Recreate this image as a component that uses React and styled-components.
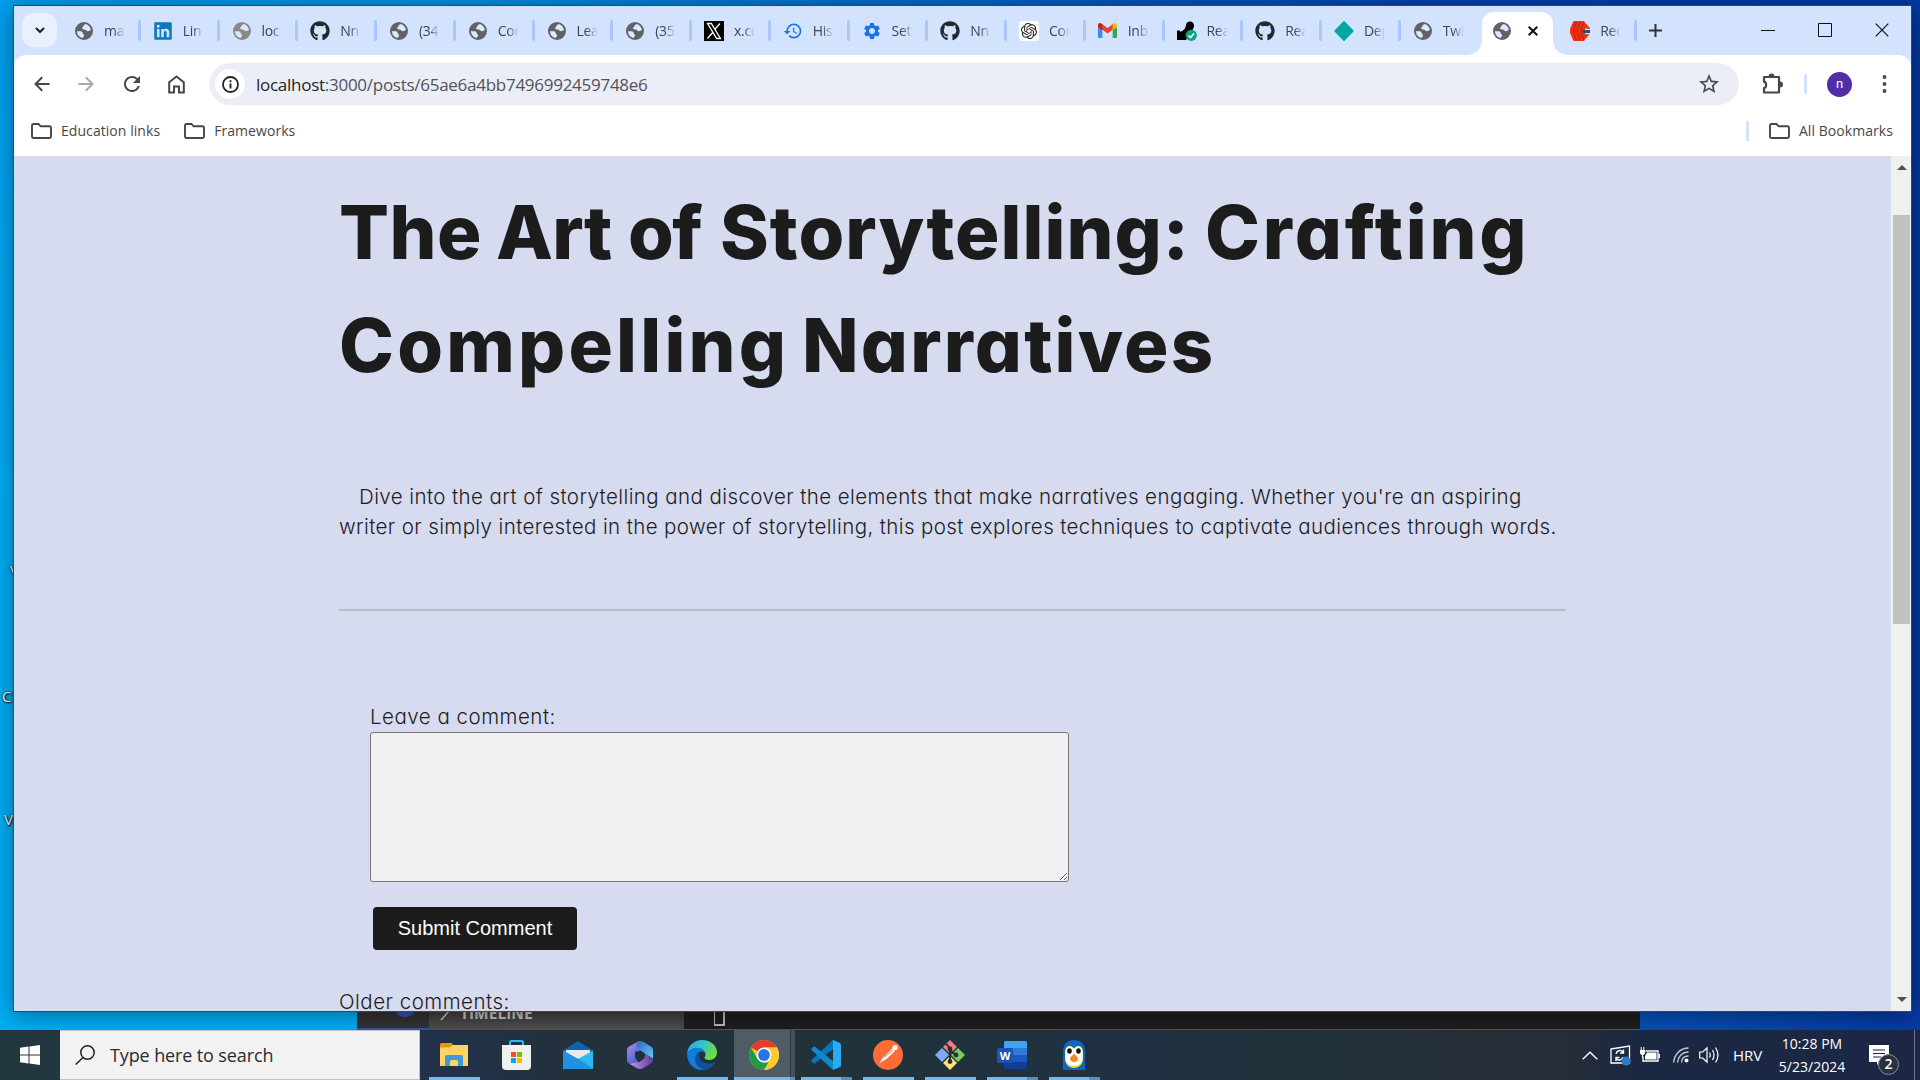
import React from "react";
import styled, { createGlobalStyle, css } from "styled-components";
import { FaGithub, FaLinkedin } from "react-icons/fa";
import { MdHistory, MdSettings, MdRefresh, MdStarBorder } from "react-icons/md";
import { SiOpenai } from "react-icons/si";

const UI = `"Open Sans", "Noto Sans", sans-serif`;
const PAGE = `Inter, "Open Sans", sans-serif`;

const Global = createGlobalStyle`
  * { box-sizing: border-box; }
  body { margin: 0; overflow: hidden; }
  svg { display: block; flex: none; }
`;

/* ---------- desktop ---------- */

const Desktop = styled.div`
  position: relative;
  width: 1920px;
  height: 1080px;
  overflow: hidden;
  display: flex;
  flex-direction: column;
  font-family: ${UI};
  background:
    linear-gradient(#009fee 0, #00aef6 500px) 0 0 / 14px 100% no-repeat,
    linear-gradient(90deg, #009fee 0, #0090e4 480px, #0076d4 780px, #0054bd 1150px, #003fae 1500px, #003aa6 1920px) 0 0 / 100% 10px no-repeat,
    linear-gradient(90deg, transparent 0 1600px, #0750b9 1640px, #0639a5 1920px) 0 1000px / 100% 40px no-repeat,
    linear-gradient(90deg, #00aef6 0 960px, #0039a0 960px);
`;

const DesktopLabel = styled.span`
  position: absolute;
  left: ${(p) => p.$x}px;
  top: ${(p) => p.$y}px;
  font-size: 15px;
  line-height: 20px;
  color: #fff;
  text-shadow: 1px 1px 2px #000, 0 0 2px #000;
`;

/* ---------- editor window behind the browser ---------- */

const Editor = styled.div`
  position: absolute;
  left: 357px;
  top: 990px;
  width: 1283px;
  height: 40px;
  display: flex;
  background: #1e1e1e;
  border-bottom: 1px solid #555;
`;
const ActivityBar = styled.div`
  width: 72px;
  padding-left: 37px;
  background: #333;
  border-bottom: 1px solid #3a50a8;
`;
const ActivityDot = styled.div`
  width: 22px;
  height: 22px;
  margin-top: 5px;
  border-radius: 50%;
  background: #3850b4;
`;
const SideBar = styled.div`
  width: 255px;
  padding: 15px 0 0 11px;
  display: flex;
  gap: 10px;
  background: linear-gradient(#3c3c3c 50%, #4f4f4f);
  color: #c4c4c4;
  font-size: 15.5px;
  line-height: 17px;
  font-weight: 700;
`;
const Cursor = styled.div`
  width: 11px;
  height: 20px;
  margin: 16px 0 0 30px;
  border: 2px solid #bbb;
  border-left-width: 1px;
`;

/* ---------- browser ---------- */

const Browser = styled.div`
  position: absolute;
  left: 13px;
  top: 5px;
  width: 1899px;
  height: 1007px;
  display: flex;
  flex-direction: column;
  border: 1px solid #2c4a66;
  background: #fff;
  box-shadow: 0 3px 22px rgba(0, 0, 0, 0.42);
`;
const TabStrip = styled.div`
  height: 49px;
  flex: none;
  display: flex;
  background: #d3e3fd;
`;
const TabSearch = styled.div`
  width: 35px;
  height: 34px;
  margin: 7px 4px 0 8px;
  border-radius: 12px;
  background: #e9f1fe;
  display: grid;
  place-items: center;
`;
const TabBox = styled.div`
  position: relative;
  width: 78.75px;
  height: 49px;
  flex: none;
  padding-left: 14px;
  display: flex;
  align-items: center;
  gap: 11px;
  ${(p) =>
    p.$divider &&
    css`
      &::after {
        content: "";
        position: absolute;
        right: -1px;
        top: 14px;
        width: 3px;
        height: 21px;
        border-radius: 2px;
        background: #a8c7fa;
      }
    `}
`;
const TabLabel = styled.span`
  width: 21px;
  overflow: hidden;
  white-space: nowrap;
  font-size: 14px;
  line-height: 20px;
  letter-spacing: -0.3px;
  color: #3c4350;
  mask-image: linear-gradient(90deg, #000 45%, transparent);
`;
const ActiveTab = styled.div`
  position: relative;
  width: 71px;
  height: 43px;
  flex: none;
  margin: 6px 4.75px 0 3px;
  padding: 0 15px 5px 11px;
  display: flex;
  align-items: center;
  justify-content: space-between;
  border-radius: 12px 12px 0 0;
  background: #fff;
  &::before,
  &::after {
    content: "";
    position: absolute;
    bottom: 0;
    width: 14px;
    height: 14px;
  }
  &::before {
    left: -14px;
    background: radial-gradient(circle at 0 0, transparent 13.5px, #fff 14px);
  }
  &::after {
    right: -14px;
    background: radial-gradient(circle at 100% 0, transparent 13.5px, #fff 14px);
  }
`;
const Favicon = styled.span`
  width: 20px;
  height: 20px;
  flex: none;
  display: grid;
  place-items: center;
  margin: 0 -1px;
  color: ${(p) => p.$color || "#5f6368"};
  background: ${(p) => p.$bg || "none"};
  border-radius: ${(p) => p.$radius || 0}px;
`;
const NewTab = styled.div`
  padding: 18px 0 0 13px;
  flex: 1;
`;
const WindowButtons = styled.div`
  display: flex;
  gap: 43px;
  padding: 17px 22px 0 0;
`;

const ToolbarWrap = styled.div`
  background: #d3e3fd;
`;
const Toolbar = styled.div`
  height: 58px;
  flex: none;
  display: flex;
  align-items: center;
  background: #fff;
  border-radius: 12px 12px 0 0;
  padding-left: 16px;
  color: #474747;
`;
const NavButton = styled.span`
  width: 45px;
  padding-left: ${(p) => p.$pad || 0}px;
`;
const Omnibox = styled.div`
  width: 1530px;
  height: 42px;
  margin-left: -1px;
  padding: 0 18px 0 6px;
  display: flex;
  align-items: center;
  border-radius: 21px;
  background: #ebeef7;
`;
const SiteInfo = styled.span`
  width: 30px;
  height: 30px;
  border-radius: 50%;
  background: #fff;
  display: grid;
  place-items: center;
`;
const Url = styled.span`
  flex: 1;
  margin: 0 0 0 11px;
  font-size: 17px;
  letter-spacing: -0.27px;
  color: #50535a;
  b {
    font-weight: 400;
    color: #1f1f1f;
  }
`;
const Divider = styled.span`
  width: 3px;
  height: 20px;
  border-radius: 1px;
  background: #d3e3fd;
`;
const Avatar = styled.span`
  width: 25px;
  height: 25px;
  margin: 0 30px 0 20px;
  border-radius: 50%;
  background: #512da8;
  color: #fff;
  font: 13px/24px Roboto, sans-serif;
  text-align: center;
`;
const Extensions = styled.span`
  margin: 0 21px 0 23px;
`;

const Bookmarks = styled.div`
  height: 43px;
  flex: none;
  display: flex;
  align-items: center;
  padding: 0 18px 7px 17px;
  background: #fff;
  color: #474747;
`;
const Bookmark = styled.span`
  display: flex;
  align-items: center;
  gap: 9px;
  margin-right: ${(p) => p.$after || 0}px;
  margin-left: ${(p) => p.$before || 0}px;
  font-size: 14px;
  letter-spacing: 0.06px;
  line-height: 20px;
  white-space: nowrap;
`;
const Spacer = styled.span`
  flex: 1;
`;

/* ---------- page ---------- */

const Viewport = styled.div`
  flex: 1;
  min-height: 0;
  display: flex;
  overflow: hidden;
  background: #d6dbf0;
`;
const Post = styled.main`
  flex: 1;
  padding: 20px 325px 0;
  color: #1c1c1c;
  font-family: ${PAGE};
  font-feature-settings: "cv11";
  white-space: nowrap;
`;
const Title = styled.h1`
  margin: 0;
  font-size: 74px;
  line-height: 112.5px;
  font-weight: 800;
`;
const TitleLine = styled.span`
  display: flex;
`;
const Word = styled.span`
  width: ${(p) => p.$w}px;
  letter-spacing: ${(p) => p.$ls || 0}px;
`;
const Body = styled.p`
  margin: 81px 0 0;
  font-size: 20.5px;
  line-height: 30px;
  font-weight: 350;
`;
const Line = styled.span`
  display: block;
  padding-left: ${(p) => p.$indent || 0}px;
  letter-spacing: ${(p) => p.$ls || 0}px;
`;
const Rule = styled.hr`
  margin: 67px 0 0;
  border: 0;
  height: 2px;
  background: #b9bbc6;
`;
const Form = styled.form`
  margin: 91px 0 0 31px;
  display: flex;
  flex-direction: column;
  align-items: flex-start;
`;
const Label = styled.label`
  font-size: 20.5px;
  line-height: 30px;
  font-weight: 350;
  letter-spacing: 0.5px;
`;
const CommentBox = styled.textarea`
  width: 699px;
  height: 150px;
  border: 1px solid #767676;
  border-radius: 3px;
  background: #f1f1f4;
  resize: both;
`;
const Submit = styled.button`
  width: 204px;
  height: 43px;
  margin: 25px 0 37px 3px;
  padding: 0;
  border: 0;
  border-radius: 4px;
  background: #1c1c1c;
  color: #fff;
  font: 20px "Liberation Sans", sans-serif;
`;
const ScrollTrack = styled.div`
  width: 20px;
  padding: 9px 1px 9px 2px;
  display: flex;
  flex-direction: column;
  align-items: center;
  background: #f0f0f0;
`;
const ScrollThumb = styled.div`
  width: 17px;
  height: 409px;
  margin: 45px 0 auto;
  background: #c1c1c1;
`;

/* ---------- taskbar ---------- */

const Taskbar = styled.div`
  position: relative;
  height: 50px;
  margin-top: auto;
  display: flex;
  color: #fff;
  background: linear-gradient(90deg, #223840 0, #22333d 380px, #21314a 430px, #23313d 560px, #20323a 900px, #203042 1120px, #20323a 1300px, #262d37 1480px, #262d38 1560px, #1b2842 1640px, #1b2745 1920px);
`;
const Start = styled.div`
  width: 60px;
  padding: 15px 0 0 20px;
`;
const Search = styled.div`
  width: 360px;
  padding-left: 15px;
  display: flex;
  align-items: center;
  gap: 15px;
  background: #f2f2f2;
  border: 1px solid #c0c0c0;
  border-left: 0;
  color: #2b2b2b;
  font-size: 18px;
  letter-spacing: -0.12px;
`;
const Apps = styled.div`
  display: flex;
  padding-left: 3px;
`;
const AppButton = styled.div`
  position: relative;
  width: 62px;
  height: 50px;
  display: grid;
  place-items: center;
  ${(p) =>
    p.$active &&
    css`
      background: linear-gradient(90deg, transparent 0 1px, #505c65 1px 57px, #2a363e 57px 58px, #46525a 58px);
    `}
  ${(p) =>
    p.$open &&
    css`
      &::after {
        content: "";
        position: absolute;
        left: ${p.$active ? 1 : 6}px;
        right: ${p.$active ? 0 : 5}px;
        bottom: 0;
        height: 3px;
        background: ${p.$multi
          ? `linear-gradient(90deg, #76b9ed 0 calc(100% - ${p.$active ? 5 : 11}px), #5a8fb8 calc(100% - ${p.$active ? 5 : 11}px))`
          : "#76b9ed"};
      }
    `}
`;
const Tray = styled.div`
  margin-left: auto;
  display: flex;
  align-items: center;
`;
const TrayItem = styled.span`
  width: ${(p) => p.$w}px;
`;
const Lang = styled.span`
  width: 45px;
  font-size: 15px;
`;
const Clock = styled.div`
  width: 68px;
  font-size: 14px;
  line-height: 23px;
  white-space: nowrap;
  display: flex;
  flex-direction: column;
  align-items: center;
`;
const Notice = styled.div`
  position: relative;
  width: 45px;
  margin-left: 23px;
`;
const NoticeCount = styled.span`
  position: absolute;
  left: 9px;
  top: 9px;
  width: 21px;
  height: 21px;
  border-radius: 50%;
  border: 1px solid #8a8f96;
  background: #2b323b;
  font: 600 14px/18px ${UI};
  text-align: center;
`;
const ShowDesktop = styled.span`
  width: 6px;
  height: 50px;
  border-left: 1px solid #6c7382;
`;

/* ---------- drawings ---------- */

const Globe = ({ dim }) => (
  <svg width="18" height="18" viewBox="0 0 18 18" opacity={dim ? 0.8 : 1}>
    <circle cx="9" cy="9" r="9" fill={dim ? "#77736c" : "#5f6368"} />
    <path d="M2 9c1.500.4 4.300-.3 5.300 1 .8 1.100.1 2 1.300 2.400 1 .3.6 1.600-.3 2.600-.5.6-.7 1-1 1C4.400 15.200 2 12.800 2 9Z" fill="#dfe9fb" />
    <path d="M11.500 2.300C14 3.400 15.700 5.700 15.900 8.200c-1.300-.2-1.800 1-3.300 1-1.600 0-1.500-1.600-2.800-1.600-1.500 0-2.700-.2-2.700-1.500 0-1.200 1.400-1.100 1.400-2.200 0-1 1.200-1.600 3-1.600Z" fill="#dfe9fb" />
  </svg>
);
const Gmail = () => (
  <svg width="19" height="15" viewBox="0 0 19 15">
    <path d="M0 3h4.300v12H1.300Q0 15 0 13.700Z" fill="#4285f4" />
    <path d="M14.700 3H19v10.700q0 1.300-1.300 1.300h-3Z" fill="#34a853" />
    <path d="M0 2C0 .2 1.900-.6 3.300.4L9.500 5.100 15.700.4V6L9.500 10.600 0 3.600Z" fill="#ea4335" />
    <path d="M14.700 1.200C16.500-.7 19 .2 19 2.200V4l-4.300 3.200Z" fill="#fbbc04" />
    <path d="M0 2.200V4l4.300 3.200V1.200C2.500-.6 0 .2 0 2.200Z" fill="#c5221f" />
  </svg>
);
const XLogo = () => (
  <svg width="20" height="20" viewBox="0 0 20 20">
    <rect width="20" height="20" fill="#000" />
    <path d="M3.500 2.500h3.800l9.200 15h-3.800ZM16 2.500l-5.500 6.300M8.900 11.300 3.500 17.500" fill="none" stroke="#fff" strokeWidth="1.300" />
  </svg>
);
const TestedRobot = () => (
  <svg width="20" height="20" viewBox="0 0 20 20">
    <path d="M0 19V9.500h2.500l1 1.300c2.500-1 4.500-2.400 5.200-5.300C8.800 2 10.500.5 13 .5s4 1.800 4 4.300c0 1.500-.5 2.700-1.500 4L9 19Z" fill="#000" />
    <circle cx="14.300" cy="14.300" r="5.600" fill="#10a37f" />
    <path d="m11.500 14.500 2 2 3.500-4" fill="none" stroke="#fff" strokeWidth="1.600" />
  </svg>
);
const Diamond = () => (
  <svg width="20" height="20" viewBox="0 0 20 20">
    <path d="M10 .8 19 10l-9 9.200L1 10Z" fill="#00a8a0" stroke="#00a8a0" strokeWidth="1.400" strokeLinejoin="round" />
  </svg>
);
const Stripes = () => (
  <svg width="20" height="20" viewBox="0 0 20 20">
    <path d="M3.500 0h10L20 7v6l-6.500 7h-10L0 12V8Z" fill="#f0300f" />
    <path d="M6.500.5 3.800 7.500v5l2.700 7M10.300.5 7.600 7.500v5l2.700 7M14.100.5l-2.700 7v5l2.700 7" fill="none" stroke="#a32410" strokeWidth=".8" />
    <path d="M15 7.500 20 8v5.500l-5-.5Z" fill="#d3e3fd" />
    <path d="M12.500 9H20v3h-7.500Z" fill="#155e68" />
  </svg>
);
const Cross = ({ size, w = 1.4 }) => (
  <svg width={size} height={size} viewBox={`0 0 ${size} ${size}`}>
    <path d={`M.7.7 ${size - 0.7} ${size - 0.7}M${size - 0.7}.7.7 ${size - 0.7}`} stroke="#111" strokeWidth={w} />
  </svg>
);
const Arrow = ({ flip, color }) => (
  <svg width="16" height="16" viewBox="0 0 16 16">
    <path d={flip ? "M.5 8H14M7.800 1.200 14.500 8l-6.700 6.800" : "M15.500 8H2M8.200 1.200 1.500 8l6.700 6.800"} fill="none" stroke={color} strokeWidth="2" />
  </svg>
);
const Home = () => (
  <svg width="17" height="19" viewBox="0 0 17 19">
    <path d="M1.200 7.200 8.500 1.500l7.300 5.700V17.500h-4.800v-6H6v6H1.200Z" fill="none" stroke="#474747" strokeWidth="2" />
  </svg>
);
const Info = () => (
  <svg width="17" height="17" viewBox="0 0 17 17">
    <circle cx="8.500" cy="8.500" r="7.500" fill="none" stroke="#222" strokeWidth="1.800" />
    <path d="M8.500 7.500v5M8.500 4.300v1.900" stroke="#222" strokeWidth="1.900" />
  </svg>
);
const Puzzle = () => (
  <svg width="21" height="22" viewBox="0 0 21 22">
    <path d="M2 4h15v15.500H2v-4.300c2.800-.5 2.800-6 0-6.500Z" fill="none" stroke="#474747" strokeWidth="2.200" strokeLinejoin="round" />
    <path d="M6.500 3.500a3 3 0 0 1 6 0ZM18 8.500a3 3 0 0 1 0 6Z" fill="#474747" />
  </svg>
);
const Dots = () => (
  <svg width="5" height="18" viewBox="0 0 5 18">
    {[2, 9, 16].map((y) => <circle key={y} cx="2.500" cy={y} r="1.900" fill="#474747" />)}
  </svg>
);
const Folder = () => (
  <svg width="21" height="16" viewBox="0 0 21 16">
    <path d="M1 2.500Q1 1 2.500 1h5l2.200 2.300h8.800Q20 3.300 20 4.800v8.700q0 1.500-1.500 1.500h-16Q1 15 1 13.500Z" fill="none" stroke="#474747" strokeWidth="1.900" />
  </svg>
);
const Tri = ({ down }) => (
  <svg width="10" height="5" viewBox="0 0 10 5">
    <path d={down ? "M0 0h10L5 5Z" : "M0 5h10L5 0Z"} fill="#505050" />
  </svg>
);

const Explorer = () => (
  <svg width="28" height="24" viewBox="0 0 28 24">
    <path d="M0 1.500Q0 0 1.500 0h10l2 2.500V6H0Z" fill="#e19c05" />
    <path d="M0 4.500h10l3-2.500h15v21H0Z" fill="#fdd368" />
    <path d="M5 23v-9q0-2 2-2h14q2 0 2 2v9h-5v-4.500q0-1.500-1.500-1.500h-5q-1.500 0-1.500 1.500V23Z" fill="#3f97dc" />
  </svg>
);
const Store = () => (
  <svg width="29" height="30" viewBox="0 0 29 30">
    <path d="M8 6V2.500Q8 1 9.500 1h10Q21 1 21 2.500V6" fill="none" stroke="#2fb7ef" strokeWidth="2" />
    <path d="M0 5h29v21q0 4-4 4H4q-4 0-4-4Z" fill="#f0f0f0" />
    <path d="M9 12h5v5H9Z" fill="#f25022" /><path d="M15 12h5v5h-5Z" fill="#7fba00" />
    <path d="M9 18h5v5H9Z" fill="#00a4ef" /><path d="M15 18h5v5h-5Z" fill="#ffb900" />
  </svg>
);
const Mail = () => (
  <svg width="30" height="28" viewBox="0 0 30 28">
    <path d="M0 9.500 15 0l15 9.500V14H0Z" fill="#0f62b0" />
    <path d="M3 9h24v9H3Z" fill="#e8eaee" />
    <path d="M0 9.500 15 18 30 9.500V28H0Z" fill="#2fb8f2" />
    <path d="M0 28 15 17.500 30 28Z" fill="#1c93e0" />
    <path d="M0 9.500V28L15 18Z" fill="#2191dd" />
  </svg>
);
const Office = () => (
  <svg width="26" height="28" viewBox="0 0 26 28">
    <defs>
      <linearGradient id="o1" x1="0" y1="0" x2=".4" y2="1"><stop offset="0" stopColor="#b98be4" /><stop offset="1" stopColor="#4a63d2" /></linearGradient>
      <linearGradient id="o2" x1="0" y1="0" x2="1" y2="1"><stop offset="0" stopColor="#3563c8" /><stop offset="1" stopColor="#5cd0f7" /></linearGradient>
      <linearGradient id="o3" x1="0" y1="0" x2="1" y2="0"><stop offset="0" stopColor="#c690ea" /><stop offset="1" stopColor="#5a3f9c" /></linearGradient>
    </defs>
    <path d="M12 0 2 5.500Q0 6.700 0 9v10q0 2.300 2 3.500l6 3.200 3-5-3-4V11l4-3Z" fill="url(#o1)" />
    <path d="M10 1.200Q13-.8 16 .8l8 4.700q2 1.200 2 3.500v8.500l-8.500-5L13 9.500 9.500 11V3Z" fill="url(#o2)" />
    <path d="M26 17.500V19q0 2.300-2 3.500l-8.500 5q-2.500 1.200-5 0L3 23l6-1.500q4 0 8-3.500l1.500-5Z" fill="url(#o3)" />
    <path d="m13 9.500 4 2.200v4.600l-4 2.200-4-2.200v-4.600Z" fill="#202f3a" />
  </svg>
);
const Edge = () => (
  <svg width="30" height="30" viewBox="0 0 30 30">
    <defs>
      <linearGradient id="e1" x1="0" y1="0" x2="1" y2=".5"><stop offset="0" stopColor="#2ba7e8" /><stop offset=".5" stopColor="#35c4c8" /><stop offset="1" stopColor="#6ce03d" /></linearGradient>
    </defs>
    <path d="M15 0c9 0 15 5.800 15 12.500 0 4.500-3.500 7.500-7.500 7.500-2.500 0-5-.8-5-2.200 0-.8 1-1.300 1-3.300C18.500 11 15 8.500 11 8.500 6 8.500 1.500 11 .2 13 1 5.500 7.500 0 15 0Z" fill="url(#e1)" />
    <path d="M.2 13C1.500 9.800 5.500 7.800 10.500 7.800c5 0 8 3.200 8 6.700-.4-2-2-3.200-4.200-3-3 .3-5.300 3-5.300 7 0 5.500 4.500 10.500 10 10.800C17.500 30 16 30 15 30 6 30-.8 22 .2 13Z" fill="#137bd8" />
    <path d="M14.300 11.500C11 12.500 8 15.500 8 19.500c0 5 4 9.700 10 10.200 4.500-.5 8-3.200 10-6.700.3-.7-.3-1-1-.6-1.300.6-3 1-5 1-6 0-10-3.400-10-7.700 0-1.700.8-3.300 2.300-4.200Z" fill="#11519b" />
  </svg>
);
const ChromeLogo = () => (
  <svg width="30" height="30" viewBox="0 0 30 30">
    <circle cx="15" cy="15" r="15" fill="#fcc934" />
    <path d="M15 15 2 7.500A15 15 0 0 1 28 7.500H15Z" fill="#e33b2e" />
    <path d="M2 7.500 8.500 18.800 15 22.500h5L15 30A15 15 0 0 1 2 7.500Z" fill="#25994b" />
    <path d="M21.500 18.700 15 30A15 15 0 0 0 28 7.500H15Z" fill="#fcc934" />
    <circle cx="15" cy="15" r="7.500" fill="#fff" /><circle cx="15" cy="15" r="5.900" fill="#2a72e8" />
  </svg>
);
const Code = () => (
  <svg width="30" height="30" viewBox="0 0 30 30">
    <path d="M22 0v9L4 23.200q-.8.600-1.600 0L.500 21.500q-.8-.8 0-1.600Z" fill="#0078c1" />
    <path d="M22 30v-9L4 6.800q-.8-.6-1.600 0L.500 8.500q-.8.8 0 1.600Z" fill="#1088ce" />
    <path d="m22 0 7 3q1 .5 1 1.500v21q0 1-1 1.500l-7 3Z" fill="#2aaaf2" />
  </svg>
);
const Postman = () => (
  <svg width="30" height="30" viewBox="0 0 30 30">
    <circle cx="15" cy="15" r="15" fill="#ff6c37" />
    <circle cx="22" cy="7.500" r="2.600" fill="#fff" />
    <path d="m19.500 8.500 2.500 2.500-8.500 8-7 4 3.500-5.500Z" fill="#fff" />
    <path d="m10.500 18 9-7.500" stroke="#ff6c37" strokeWidth=".8" />
  </svg>
);
const Git = () => (
  <svg width="30" height="30" viewBox="0 0 30 30">
    <path d="m15 0 7 7-7 7-7-7Z" fill="#f27c7c" /><path d="m23 8 7 7-7 7-7-7Z" fill="#7fcb58" />
    <path d="m7 8 7 7-7 7-7-7Z" fill="#7aacf8" /><path d="m15 16 7 7-7 7-7-7Z" fill="#fbe376" />
    <path d="m11 3.500 4 5V22M15 10l5.500 5" fill="none" stroke="#26313a" strokeWidth="2" />
    <circle cx="15" cy="9" r="2.400" fill="#26313a" /><circle cx="15" cy="21.500" r="2.400" fill="#26313a" /><circle cx="21" cy="15" r="2.400" fill="#26313a" />
  </svg>
);
const WordLogo = () => (
  <svg width="30" height="28" viewBox="0 0 30 28">
    <path d="M7 1.500Q7 0 8.500 0h20Q30 0 30 1.500V7H7Z" fill="#41a5ee" /><path d="M7 7h23v7H7Z" fill="#2b7cd3" />
    <path d="M7 14h23v7H7Z" fill="#185abd" /><path d="M7 21h23v5.500q0 1.500-1.500 1.500h-20Q7 28 7 26.500Z" fill="#103f91" />
    <rect y="7" width="16" height="15" rx="1.500" fill="#1a55b5" />
    <text x="8" y="18.500" textAnchor="middle" fontFamily="Open Sans" fontWeight="700" fontSize="11" fill="#fff">W</text>
  </svg>
);
const Penguin = () => (
  <svg width="24" height="30" viewBox="0 0 24 30">
    <path d="M1 12C1 4 5 0 12 0s11 4 11 12v18H1Z" fill="#0b68bd" />
    <path d="M3 13c0-5 2-7 4.500-7S12 8 12 9c0-1 2-3 4.500-3S21 8 21 13v6c0 5-4 9-9 9s-9-4-9-9Z" fill="#ffd23a" />
    <path d="M3.500 12c0-4 2-5.500 4-5.500S12 8 12 9.500c0-1.500 2.500-3 4.500-3s4 1.500 4 5.500v6c0 5-4 8-8.500 8s-8.500-3-8.500-8Z" fill="#fff" />
    <ellipse cx="7.500" cy="11" rx="2.300" ry="2.800" fill="#111" /><ellipse cx="16.500" cy="11" rx="2.300" ry="2.800" fill="#111" />
    <path d="M12 13.500 16 18q0 4-4 4t-4-4Z" fill="#f08a1d" />
  </svg>
);
const Windows = () => (
  <svg width="20" height="20" viewBox="0 0 20 20">
    <path d="M0 2.800 8.500 1.600V9.500H0ZM9.500 1.500 20 0v9.500H9.500ZM0 10.500h8.500v7.900L0 17.200ZM9.500 10.500H20V20L9.500 18.500Z" fill="#fff" />
  </svg>
);
const Lens = () => (
  <svg width="20" height="20" viewBox="0 0 20 20">
    <circle cx="12.500" cy="7.500" r="6.700" fill="none" stroke="#222" strokeWidth="1.500" /><path d="M8 12.500.7 19.500" stroke="#222" strokeWidth="1.500" />
  </svg>
);
const TrayUp = () => (
  <svg width="16" height="9" viewBox="0 0 16 9"><path d="m.7 8.300 7.300-7 7.300 7" fill="none" stroke="#fff" strokeWidth="1.400" /></svg>
);
const TrayUpdate = () => (
  <svg width="21" height="21" viewBox="0 0 21 21">
    <path d="M1 4 19.500 1v17H1Z" fill="none" stroke="#fff" strokeWidth="1.300" />
    <path d="M6 9a4 4 0 0 1 7-2M13.500 4.500V8H10M13 12a4 4 0 0 1-6.500 2M6 16v-3.500h3.500" fill="none" stroke="#fff" strokeWidth="1.400" />
    <circle cx="16" cy="16" r="4.600" fill="#2f78c4" />
  </svg>
);
const TrayBattery = () => (
  <svg width="20" height="16" viewBox="0 0 20 16">
    <path d="M5.500 4H18v10H3V9.500" fill="none" stroke="#fff" strokeWidth="1.300" /><path d="M7 5.500h9.500v7H5V9Z" fill="#fff" />
    <path d="M18.500 7H20v4h-1.500ZM0 3h5v3.500L3.500 8h-2L0 6.500Z" fill="#fff" /><path d="M1.200 3V0M3.800 3V0M2.500 8v3" stroke="#fff" />
  </svg>
);
const TrayWifi = () => (
  <svg width="16" height="16" viewBox="0 0 16 16">
    <path d="M.7 15.500C1 8 7 1 15.500 1M4.500 15.500C4.800 10 9 5 15.500 5M8.500 15.500c.2-4 3-6.500 7-6.500" fill="none" stroke="#c8ccd4" strokeWidth="1.300" />
    <circle cx="13.500" cy="13.500" r="2" fill="#fff" />
  </svg>
);
const TrayVolume = () => (
  <svg width="21" height="18" viewBox="0 0 21 18">
    <path d="M.7 6h3L8 2v14l-4.300-4h-3Z" fill="none" stroke="#fff" strokeWidth="1.200" />
    <path d="M10.500 6.500q1.500 2.500 0 5M13.500 4q3 5 0 10M16.500 1.500q5 7.500 0 15" fill="none" stroke="#fff" strokeWidth="1.200" />
  </svg>
);
const Note = () => (
  <svg width="20" height="20" viewBox="0 0 20 20">
    <path d="M0 0h20v17h-9l-3 3v-3H0Z" fill="#fff" /><path d="M4 5h12M4 8.500h12M4 12h8" stroke="#1b2843" strokeWidth="1.200" />
  </svg>
);

/* ---------- data ---------- */

const TABS = [
  { label: "ma", icon: <Globe /> },
  { label: "Lin", icon: <FaLinkedin size={20} />, color: "#0a7abf" },
  { label: "loc", icon: <Globe dim /> },
  { label: "Nn", icon: <FaGithub size={20} />, color: "#24292f" },
  { label: "(34", icon: <Globe /> },
  { label: "Cor", icon: <Globe /> },
  { label: "Lea", icon: <Globe /> },
  { label: "(35", icon: <Globe /> },
  { label: "x.co", icon: <XLogo /> },
  { label: "His", icon: <MdHistory size={20} />, color: "#1a73e8" },
  { label: "Set", icon: <MdSettings size={20} />, color: "#1a73e8" },
  { label: "Nn", icon: <FaGithub size={20} />, color: "#24292f" },
  { label: "Cor", icon: <SiOpenai size={16} />, color: "#222", bg: "#fff", radius: 3 },
  { label: "Inb", icon: <Gmail /> },
  { label: "Rea", icon: <TestedRobot /> },
  { label: "Rea", icon: <FaGithub size={20} />, color: "#24292f" },
  { label: "Dep", icon: <Diamond /> },
  { label: "Twi", icon: <Globe />, last: true },
];

const TITLE = [
  [
    { text: "The", w: 157, ls: 0.4 },
    { text: "Art", w: 132, ls: -0.8 },
    { text: "of", w: 92, ls: -1.5 },
    { text: "Storytelling:", w: 485, ls: 1 },
    { text: "Crafting", w: 320, ls: 2.8 },
  ],
  [
    { text: "Compelling", w: 463, ls: 3.2 },
    { text: "Narratives", w: 411, ls: 2.15 },
  ],
];

const APPS = [
  { icon: <Explorer />, open: true },
  { icon: <Store /> },
  { icon: <Mail /> },
  { icon: <Office /> },
  { icon: <Edge />, open: true },
  { icon: <ChromeLogo />, open: true, active: true, multi: true },
  { icon: <Code />, open: true, multi: true },
  { icon: <Postman />, open: true },
  { icon: <Git />, open: true },
  { icon: <WordLogo />, open: true, multi: true },
  { icon: <Penguin />, open: true, multi: true },
];

const Tab = ({ label, icon, color, bg, radius, last }) => (
  <TabBox $divider={!last}>
    <Favicon $color={color} $bg={bg} $radius={radius}>{icon}</Favicon>
    <TabLabel>{label}</TabLabel>
  </TabBox>
);

export default function App() {
  return (
    <Desktop>
      <Global />
      <DesktopLabel $x={10} $y={558}>v</DesktopLabel>
      <DesktopLabel $x={2} $y={686}>Cl</DesktopLabel>
      <DesktopLabel $x={4} $y={809}>V</DesktopLabel>

      <Editor>
        <ActivityBar><ActivityDot /></ActivityBar>
        <SideBar>
          <svg width="10" height="16" viewBox="0 0 10 16"><path d="m1 15 8-9" stroke="#c4c4c4" strokeWidth="1.600" /></svg>
          TIMELINE
        </SideBar>
        <Cursor />
      </Editor>

      <Browser>
        <TabStrip>
          <TabSearch>
            <svg width="10" height="7" viewBox="0 0 10 7"><path d="m1 1 4 4 4-4" fill="none" stroke="#1f1f1f" strokeWidth="2" /></svg>
          </TabSearch>
          {TABS.map((t, i) => <Tab key={i} {...t} />)}
          <ActiveTab><Globe /><Cross size={10} w={2} /></ActiveTab>
          <Tab label="Rec" icon={<Stripes />} />
          <NewTab><svg width="13" height="13" viewBox="0 0 13 13"><path d="M6.500 0v13M0 6.500h13" stroke="#333" strokeWidth="2" /></svg></NewTab>
          <WindowButtons>
            <svg width="14" height="14" viewBox="0 0 14 14"><path d="M0 7.500h14" stroke="#111" strokeWidth="1" /></svg>
            <svg width="14" height="14" viewBox="0 0 14 14"><path d="M.5.5h13v13H.5Z" fill="none" stroke="#111" /></svg>
            <Cross size={14} w={1.200} />
          </WindowButtons>
        </TabStrip>
        <ToolbarWrap>
          <Toolbar>
            <NavButton $pad={4}><Arrow color="#474747" /></NavButton>
            <NavButton $pad={3}><Arrow flip color="#a8a8a8" /></NavButton>
            <NavButton><MdRefresh size={24} /></NavButton>
            <NavButton $pad={3}><Home /></NavButton>
            <Omnibox>
              <SiteInfo><Info /></SiteInfo>
              <Url><b>localhost</b>:3000/posts/65ae6a4bb7496992459748e6</Url>
              <MdStarBorder size={24} />
            </Omnibox>
            <Extensions><Puzzle /></Extensions>
            <Divider />
            <Avatar>n</Avatar>
            <Dots />
          </Toolbar>
        </ToolbarWrap>
        <Bookmarks>
          <Bookmark $after={24}><Folder />Education links</Bookmark>
          <Bookmark><Folder />Frameworks</Bookmark>
          <Spacer />
          <Divider />
          <Bookmark $before={20}><Folder />All Bookmarks</Bookmark>
        </Bookmarks>
        <Viewport>
          <Post>
            <Title>
              {TITLE.map((line, i) => (
                <TitleLine key={i}>
                  {line.map((word) => <Word key={word.text} $w={word.w} $ls={word.ls}>{word.text}</Word>)}
                </TitleLine>
              ))}
            </Title>
            <Body>
              <Line $indent={20} $ls={0.42}>Dive into the art of storytelling and discover the elements that make narratives engaging. Whether you're an aspiring</Line>
              <Line $ls={0.39}>writer or simply interested in the power of storytelling, this post explores techniques to captivate audiences through words.</Line>
            </Body>
            <Rule />
            <Form>
              <Label>Leave a comment:</Label>
              <CommentBox />
              <Submit type="button">Submit Comment</Submit>
            </Form>
            <Label>Older comments:</Label>
          </Post>
          <ScrollTrack><Tri /><ScrollThumb /><Tri down /></ScrollTrack>
        </Viewport>
      </Browser>

      <Taskbar>
        <Start><Windows /></Start>
        <Search><Lens />Type here to search</Search>
        <Apps>
          {APPS.map((a, i) => (
            <AppButton key={i} $open={a.open} $active={a.active} $multi={a.multi}>{a.icon}</AppButton>
          ))}
        </Apps>
        <Tray>
          <TrayItem $w={28}><TrayUp /></TrayItem>
          <TrayItem $w={30}><TrayUpdate /></TrayItem>
          <TrayItem $w={33}><TrayBattery /></TrayItem>
          <TrayItem $w={26}><TrayWifi /></TrayItem>
          <TrayItem $w={34}><TrayVolume /></TrayItem>
          <Lang>HRV</Lang>
          <Clock><span>10:28 PM</span><span>5/23/2024</span></Clock>
          <Notice><Note /><NoticeCount>2</NoticeCount></Notice>
          <ShowDesktop />
        </Tray>
      </Taskbar>
    </Desktop>
  );
}
